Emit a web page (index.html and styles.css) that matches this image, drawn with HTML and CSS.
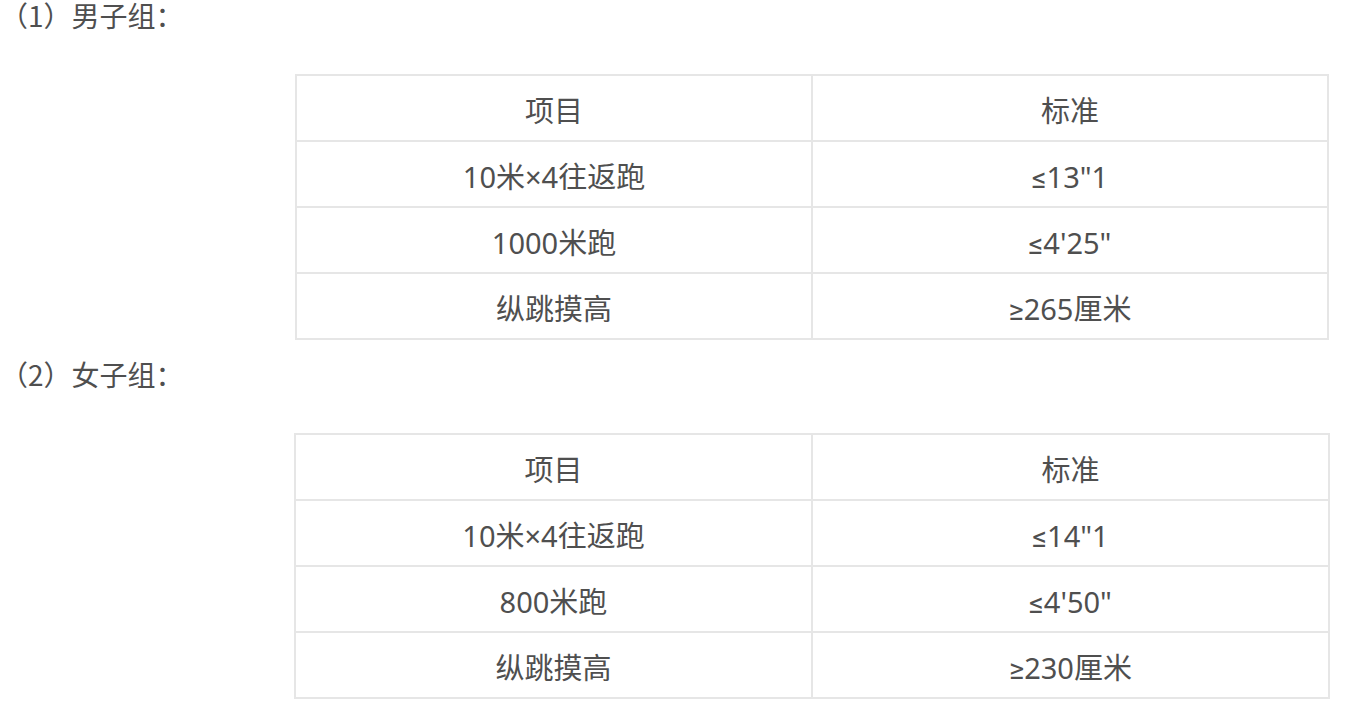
FILE: index.html
```html
<!DOCTYPE html>
<html lang="zh-CN">
<head>
<meta charset="utf-8">
<title>体能测试标准</title>
<link rel="stylesheet" href="styles.css">
</head>
<body>
<div class="page">
  <p class="group-title first">（1）男子组：</p>
  <table class="std-table t1">
    <tr><td>项目</td><td>标准</td></tr>
    <tr><td>10米×4往返跑</td><td>≤13"1</td></tr>
    <tr><td>1000米跑</td><td>≤4'25"</td></tr>
    <tr><td>纵跳摸高</td><td>≥265厘米</td></tr>
  </table>
  <p class="group-title">（2）女子组：</p>
  <table class="std-table t2">
    <tr><td>项目</td><td>标准</td></tr>
    <tr><td>10米×4往返跑</td><td>≤14"1</td></tr>
    <tr><td>800米跑</td><td>≤4'50"</td></tr>
    <tr><td>纵跳摸高</td><td>≥230厘米</td></tr>
  </table>
</div>
</body>
</html>
```

FILE: styles.css
```css
html, body {
  margin: 0;
  padding: 0;
  background: #ffffff;
}

.page {
  font-family: "Noto Sans CJK SC", sans-serif;
  font-size: 28px;
  line-height: 42px;
  color: #4f4f4f;
}

.group-title {
  margin: 0 0 38px 0;
}

.group-title.first {
  margin-top: -6px;
}

.std-table {
  border-collapse: collapse;
  table-layout: fixed;
  margin-bottom: 13px;
}

.t1 {
  width: 1034px;
  margin-left: 295px;
}

.t2 {
  width: 1036px;
  margin-left: 294px;
}

.std-table td {
  font-family: "Noto Sans", Roboto, "Noto Sans CJK SC", sans-serif;
  font-size: 29px;
  border: 2px solid #e6e6e6;
  text-align: center;
  padding: 14px 8px 8px;
  width: 50%;
}
```
